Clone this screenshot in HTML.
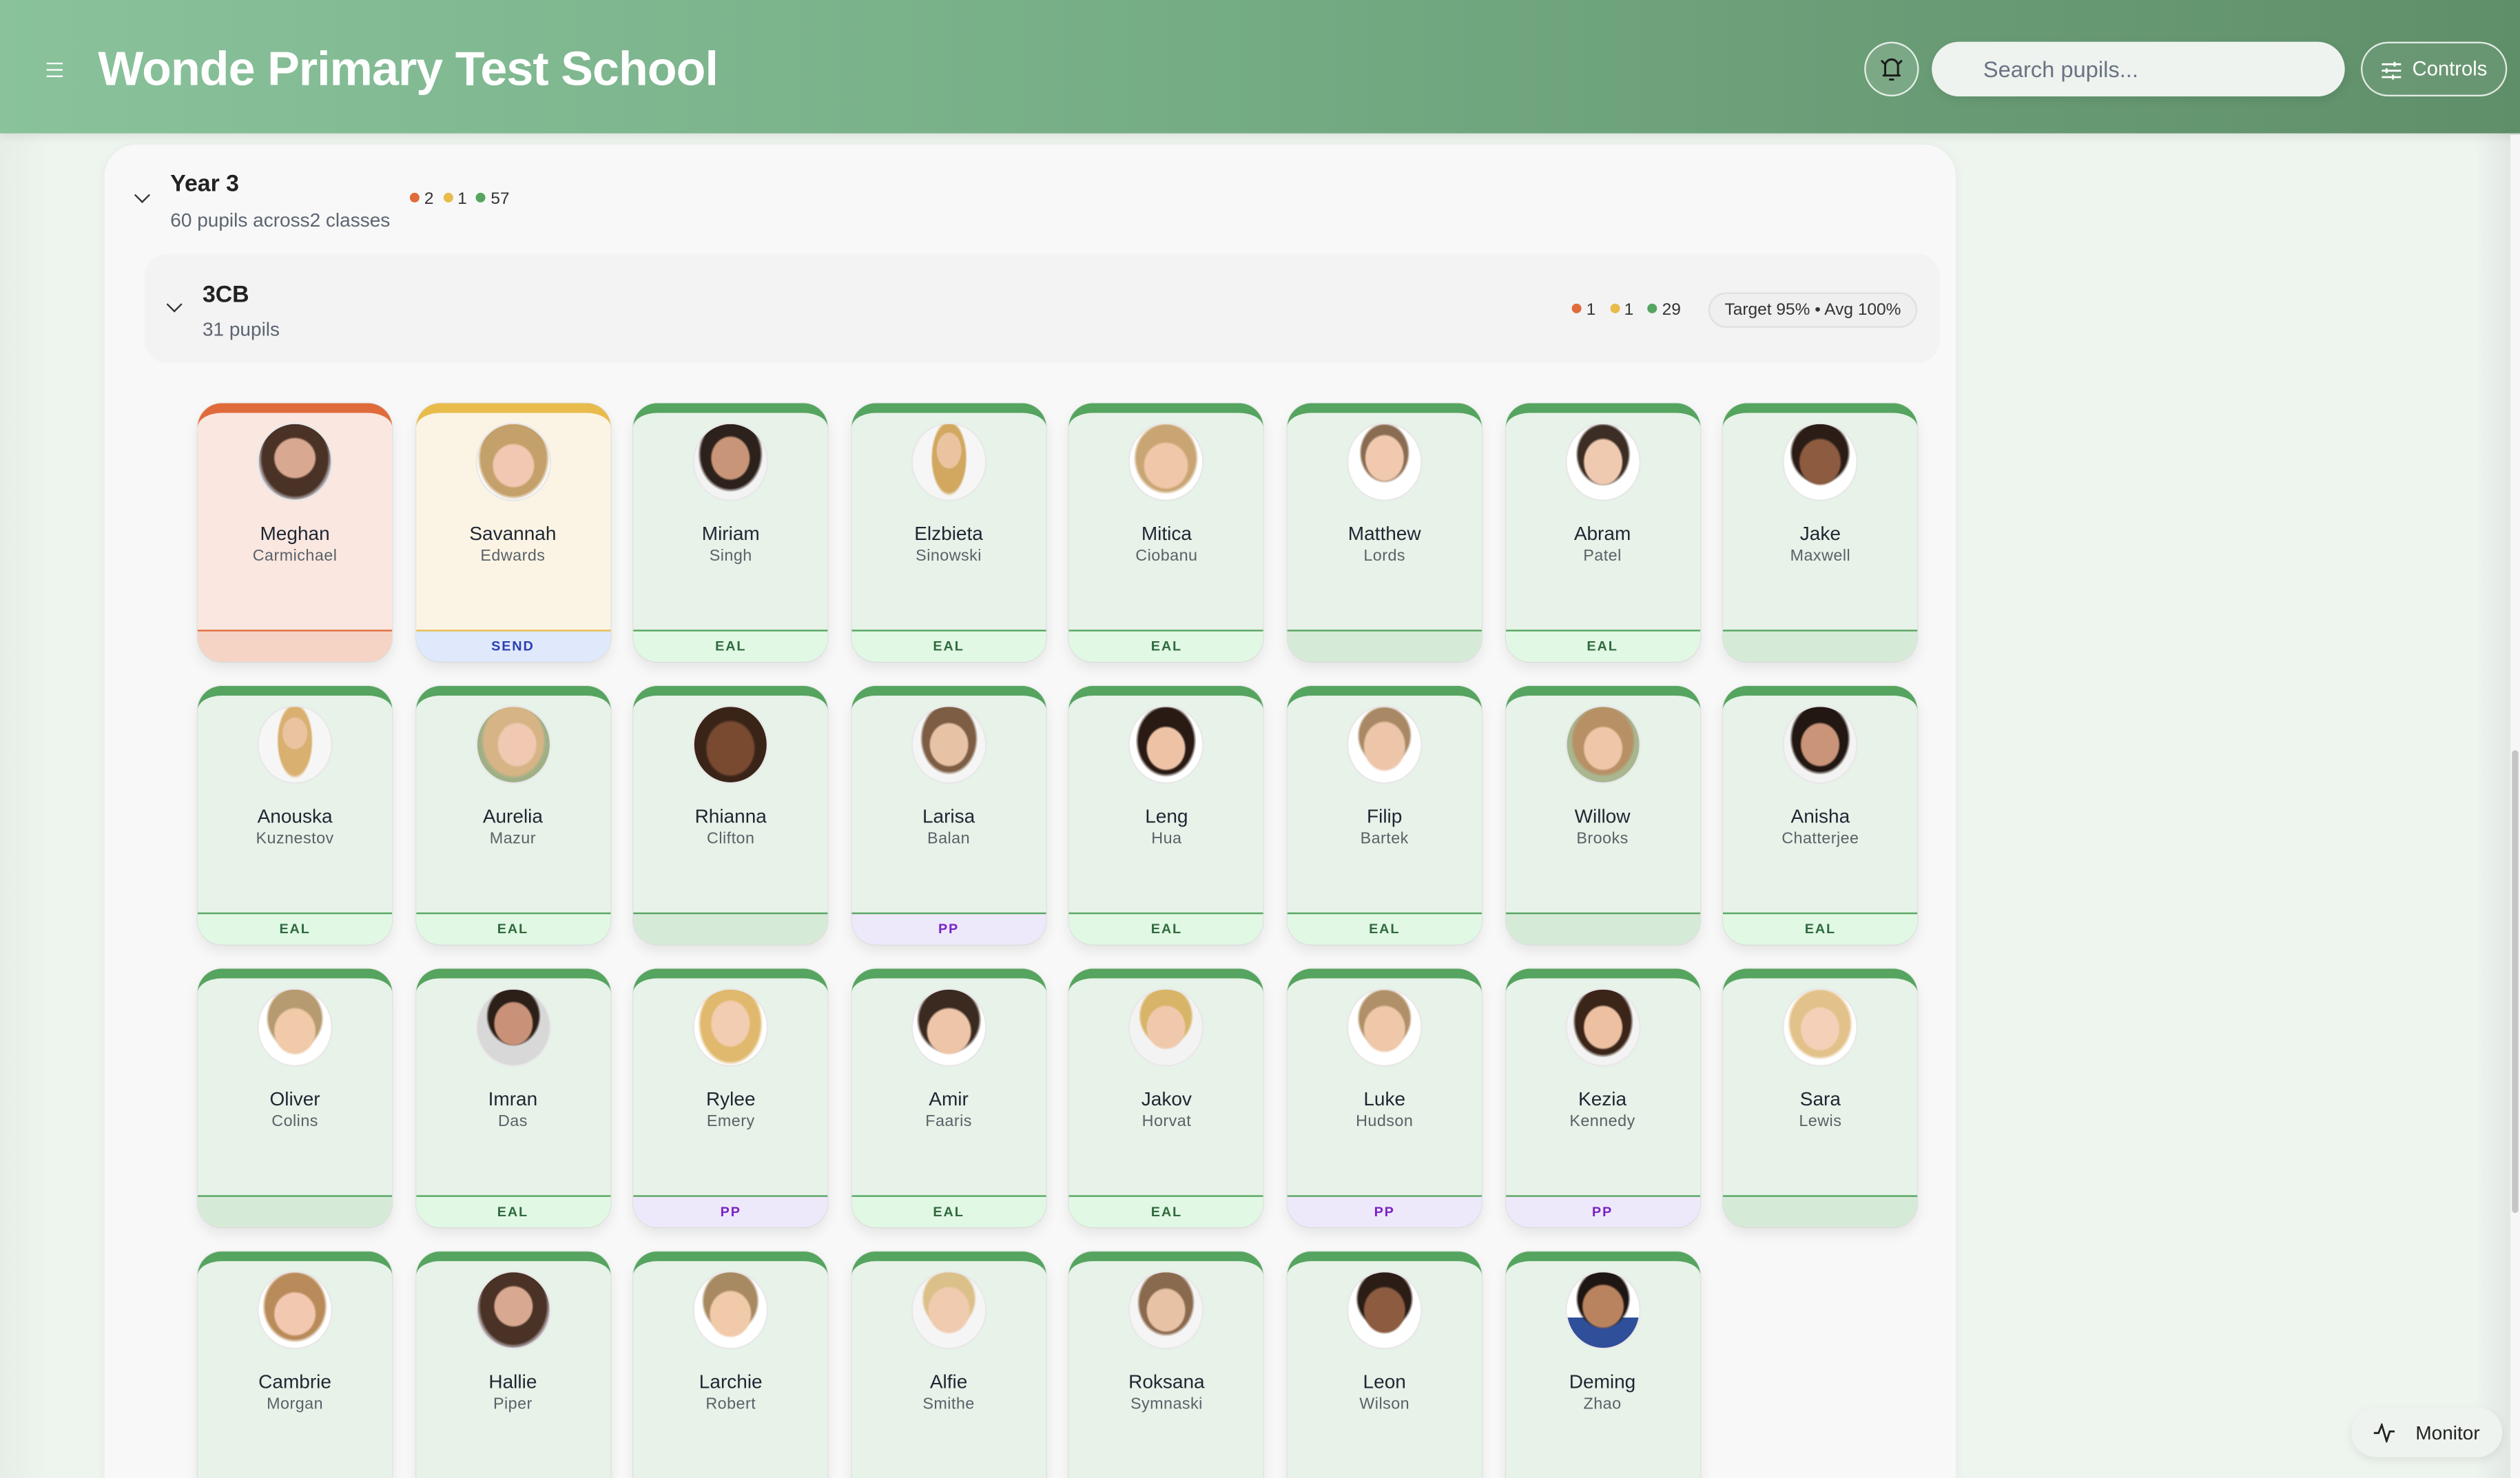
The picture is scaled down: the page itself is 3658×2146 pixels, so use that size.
<!DOCTYPE html>
<html><head><meta charset="utf-8"><style>
*{box-sizing:border-box;margin:0;padding:0}
html,body{width:3658px;height:2146px;overflow:hidden;background:#eaf1ea}
#s{position:absolute;left:0;top:0;width:1568px;height:920px;transform:scale(2.3329,2.3326);transform-origin:0 0;font-family:"Liberation Sans",sans-serif;background:linear-gradient(90deg,#e6eee7 0,#eef4ee 30px,#eef4ee 1540px,#e2e8e3 1560px);overflow:hidden}
.hdr{position:absolute;left:0;top:0;width:1568px;height:83px;background:linear-gradient(90deg,#89c29b,#74ab83 50%,#5f8f69);box-shadow:0 2px 6px rgba(0,0,0,.08)}
.ham{position:absolute;left:29px;top:39px;width:10px}
.ham i{display:block;height:1.4px;background:#fff;margin-bottom:2.6px}
.title{position:absolute;left:61px;top:27px;color:#fff;font-size:30px;font-weight:bold;letter-spacing:-0.4px}
.bell{position:absolute;left:1160px;top:26px;width:34px;height:34px;border-radius:50%;border:1px solid rgba(255,255,255,.8);background:rgba(255,255,255,.12)}
.search{position:absolute;left:1202px;top:26px;width:257px;height:34px;border-radius:17px;background:#eef3ef;color:#6a7383;font-size:14px;padding:9px 0 0 32px;box-shadow:0 2px 6px rgba(0,0,0,.08)}
.ctrl{position:absolute;left:1469px;top:26px;width:91px;height:34px;border-radius:17px;border:1px solid rgba(255,255,255,.8);color:#fff;font-size:12.5px;padding:9px 0 0 31px;background:rgba(255,255,255,.06)}
.panel{position:absolute;left:65px;top:90px;width:1152px;height:860px;border-radius:20px;background:#f7f8f7;box-shadow:0 1px 6px rgba(0,0,0,.05)}
.chev{position:absolute;width:7px;height:7px;border-right:1.3px solid #333;border-bottom:1.3px solid #333;transform:rotate(45deg)}
.t1{position:absolute;font-size:14.5px;color:#222;font-weight:bold}
.sub{position:absolute;font-size:12px;color:#5d6472}
.dot{display:inline-block;width:6px;height:6px;border-radius:50%;margin-right:3px;vertical-align:1px}
.cls{position:absolute;left:90px;top:158px;width:1117px;height:68px;border-radius:14px;background:#f2f3f2}
.pill{position:absolute;left:1063px;top:182px;width:130px;height:22px;border-radius:11px;border:1px solid #e0e0e0;background:#efefef;font-size:10.5px;color:#333;text-align:center;line-height:20px}
.grid{position:absolute;left:123px;top:251px;display:grid;grid-template-columns:repeat(8,121px);column-gap:14.6px;row-gap:15px}
.c{position:relative;width:121px;height:161px;border-radius:15px;overflow:hidden;background:#e7f2e8;border-top:6px solid #55a45f;box-shadow:0 4px 8px rgba(0,0,0,.08),0 0 0 .5px rgba(0,0,0,.06);text-align:center}
.c .av{position:absolute;left:37px;top:6px;width:47px;height:49px;border-radius:50%;border:1px solid #e8e8e8}
.c .n{position:absolute;left:0;right:0;top:68px;font-size:12px;color:#1f2633}
.c .s{position:absolute;left:0;right:0;top:84px;font-size:10px;color:#5a6168;letter-spacing:.2px}
.c .b{position:absolute;left:0;right:0;bottom:0;height:20px;border-top:1.5px solid #55a45f;background:#d6ead8;font-size:8.5px;font-weight:bold;letter-spacing:.8px;line-height:19px}
.b.e{background:#e1f8e4;color:#2f6a3e}.b.p{background:#eee8fb;color:#7a24c4}.b.d{background:#dfe9fb;color:#2b3fb2}
.c.r{background:#fae7e0;border-top-color:#e06b3a}.c.r .b{background:#f5d4c5;border-top-color:#e06b3a}
.c.y{background:#fbf4e4;border-top-color:#e8bb4a}.c.y .b{border-top-color:#e8bb4a}
.mon{position:absolute;left:1463px;top:876px;width:94px;height:31px;border-radius:16px;background:#eef3ef;box-shadow:0 2px 6px rgba(0,0,0,.08);font-size:12px;color:#222;padding:9px 0 0 40px}
</style></head><body><div id="s">
<div class="hdr">
<div class="ham"><i></i><i></i><i></i></div>
<div class="title">Wonde Primary Test School</div>
<div class="bell"><svg width="34" height="34" viewBox="0 0 34 34" style="position:absolute;left:-1px;top:-1px"><path d="M12 21h10M13 21v-6a4 4 0 0 1 8 0v6M16 23.5h2M11 12l1.5 1.5M23 12l-1.5 1.5" stroke="#1c1c1c" stroke-width="1.3" fill="none" stroke-linecap="round"/></svg></div>
<div class="search">Search pupils...</div>
<div class="ctrl"><svg width="14" height="14" viewBox="0 0 14 14" style="position:absolute;left:11px;top:10px"><path d="M1 3h12M1 7h12M1 11h12M9 1.5v3M4 5.5v3M8 9.5v3" stroke="#fff" stroke-width="1.2"/></svg>Controls</div>
</div>
<div class="panel"></div>
<div class="chev" style="left:85px;top:118px"></div>
<div class="t1" style="left:106px;top:107px">Year 3</div>
<div class="sub" style="left:106px;top:130px">60 pupils across2 classes</div>
<div class="sub" style="left:255px;top:118px;font-size:10.5px;color:#333"><span class="dot" style="background:#e06b3a"></span>2 &nbsp;<span class="dot" style="background:#e8bb4a"></span>1 &nbsp;<span class="dot" style="background:#55a45f"></span>57</div>
<div class="cls"></div>
<div class="chev" style="left:105px;top:186px"></div>
<div class="t1" style="left:126px;top:176px">3CB</div>
<div class="sub" style="left:126px;top:198px">31 pupils</div>
<div class="sub" style="left:978px;top:187px;font-size:10.5px;color:#333"><span class="dot" style="background:#e06b3a"></span>1 &nbsp;&nbsp;<span class="dot" style="background:#e8bb4a"></span>1 &nbsp;&nbsp;<span class="dot" style="background:#55a45f"></span>29</div>
<div class="pill">Target 95% • Avg 100%</div>
<div class="grid">
<div class="c r"><div class="av" style="background:radial-gradient(ellipse 30% 28% at 50% 45%,#d9a890 90%,transparent),radial-gradient(ellipse 50% 55% at 50% 45%,#4a3226 90%,transparent),#b9b3b8"></div><div class="n">Meghan</div><div class="s">Carmichael</div><div class="b"></div></div>
<div class="c y"><div class="av" style="background:radial-gradient(ellipse 30% 30% at 50% 55%,#f1c9b2 90%,transparent),radial-gradient(ellipse 50% 55% at 50% 45%,#c4a06a 90%,transparent),#fff"></div><div class="n">Savannah</div><div class="s">Edwards</div><div class="b d">SEND</div></div>
<div class="c"><div class="av" style="background:radial-gradient(ellipse 28% 30% at 50% 45%,#c99578 90%,transparent),radial-gradient(ellipse 45% 50% at 50% 40%,#2d211c 90%,transparent),#f3f3f3"></div><div class="n">Miriam</div><div class="s">Singh</div><div class="b e">EAL</div></div>
<div class="c"><div class="av" style="background:radial-gradient(ellipse 18% 25% at 50% 35%,#eac3a0 90%,transparent),radial-gradient(ellipse 25% 50% at 50% 45%,#d2a760 90%,transparent),#f6f6f6"></div><div class="n">Elzbieta</div><div class="s">Sinowski</div><div class="b e">EAL</div></div>
<div class="c"><div class="av" style="background:radial-gradient(ellipse 32% 32% at 50% 55%,#f0c7a8 90%,transparent),radial-gradient(ellipse 45% 48% at 50% 45%,#c9a574 90%,transparent),#fff"></div><div class="n">Mitica</div><div class="s">Ciobanu</div><div class="b e">EAL</div></div>
<div class="c"><div class="av" style="background:radial-gradient(ellipse 28% 32% at 50% 45%,#f0c9ae 90%,transparent),radial-gradient(ellipse 35% 40% at 50% 38%,#8a6c52 90%,transparent),#fff"></div><div class="n">Matthew</div><div class="s">Lords</div><div class="b"></div></div>
<div class="c"><div class="av" style="background:radial-gradient(ellipse 28% 32% at 50% 50%,#efc9b0 90%,transparent),radial-gradient(ellipse 38% 42% at 50% 40%,#3c2d25 90%,transparent),#fff"></div><div class="n">Abram</div><div class="s">Patel</div><div class="b e">EAL</div></div>
<div class="c"><div class="av" style="background:radial-gradient(ellipse 30% 32% at 50% 50%,#8c5b40 90%,transparent),radial-gradient(ellipse 42% 42% at 50% 38%,#2b1d16 90%,transparent),#fff"></div><div class="n">Jake</div><div class="s">Maxwell</div><div class="b"></div></div>
<div class="c"><div class="av" style="background:radial-gradient(ellipse 18% 22% at 50% 35%,#eac3a0 90%,transparent),radial-gradient(ellipse 25% 50% at 50% 45%,#d9b070 90%,transparent),#f6f6f6"></div><div class="n">Anouska</div><div class="s">Kuznestov</div><div class="b e">EAL</div></div>
<div class="c"><div class="av" style="background:radial-gradient(ellipse 28% 30% at 55% 50%,#f1c9b2 90%,transparent),radial-gradient(ellipse 45% 50% at 50% 45%,#d7b486 90%,transparent),#9fb087"></div><div class="n">Aurelia</div><div class="s">Mazur</div><div class="b e">EAL</div></div>
<div class="c"><div class="av" style="background:radial-gradient(ellipse 35% 38% at 50% 55%,#7a4a30 90%,transparent),#3a2418"></div><div class="n">Rhianna</div><div class="s">Clifton</div><div class="b"></div></div>
<div class="c"><div class="av" style="background:radial-gradient(ellipse 28% 30% at 50% 50%,#e8c2a5 90%,transparent),radial-gradient(ellipse 40% 48% at 50% 42%,#7d5d44 90%,transparent),#f5f5f5"></div><div class="n">Larisa</div><div class="s">Balan</div><div class="b p">PP</div></div>
<div class="c"><div class="av" style="background:radial-gradient(ellipse 28% 30% at 50% 55%,#eec3a5 90%,transparent),radial-gradient(ellipse 42% 48% at 50% 45%,#2a1a14 90%,transparent),#fff"></div><div class="n">Leng</div><div class="s">Hua</div><div class="b e">EAL</div></div>
<div class="c"><div class="av" style="background:radial-gradient(ellipse 30% 34% at 50% 52%,#edc6a9 90%,transparent),radial-gradient(ellipse 38% 40% at 50% 38%,#a88865 90%,transparent),#fff"></div><div class="n">Filip</div><div class="s">Bartek</div><div class="b e">EAL</div></div>
<div class="c"><div class="av" style="background:radial-gradient(ellipse 28% 30% at 50% 55%,#efc6a8 90%,transparent),radial-gradient(ellipse 45% 48% at 50% 45%,#b89066 90%,transparent),#a8b790"></div><div class="n">Willow</div><div class="s">Brooks</div><div class="b"></div></div>
<div class="c"><div class="av" style="background:radial-gradient(ellipse 28% 30% at 50% 50%,#c99478 90%,transparent),radial-gradient(ellipse 42% 48% at 50% 42%,#221712 90%,transparent),#f3f3f3"></div><div class="n">Anisha</div><div class="s">Chatterjee</div><div class="b e">EAL</div></div>
<div class="c"><div class="av" style="background:radial-gradient(ellipse 30% 32% at 50% 55%,#f0caa9 90%,transparent),radial-gradient(ellipse 40% 42% at 50% 38%,#b69a70 90%,transparent),#fff"></div><div class="n">Oliver</div><div class="s">Colins</div><div class="b"></div></div>
<div class="c"><div class="av" style="background:radial-gradient(ellipse 28% 30% at 50% 45%,#c99278 90%,transparent),radial-gradient(ellipse 38% 40% at 50% 35%,#2b1f18 90%,transparent),#d8d8d8"></div><div class="n">Imran</div><div class="s">Das</div><div class="b e">EAL</div></div>
<div class="c"><div class="av" style="background:radial-gradient(ellipse 28% 32% at 50% 45%,#f3cdb2 90%,transparent),radial-gradient(ellipse 45% 55% at 50% 45%,#e0b96e 90%,transparent),#fff"></div><div class="n">Rylee</div><div class="s">Emery</div><div class="b p">PP</div></div>
<div class="c"><div class="av" style="background:radial-gradient(ellipse 32% 32% at 50% 55%,#eec5a8 90%,transparent),radial-gradient(ellipse 45% 45% at 50% 40%,#3a2a20 90%,transparent),#fff"></div><div class="n">Amir</div><div class="s">Faaris</div><div class="b e">EAL</div></div>
<div class="c"><div class="av" style="background:radial-gradient(ellipse 28% 30% at 50% 50%,#f0c9ad 90%,transparent),radial-gradient(ellipse 38% 40% at 50% 35%,#d8b468 90%,transparent),#f3f3f3"></div><div class="n">Jakov</div><div class="s">Horvat</div><div class="b e">EAL</div></div>
<div class="c"><div class="av" style="background:radial-gradient(ellipse 30% 32% at 50% 52%,#efc8aa 90%,transparent),radial-gradient(ellipse 38% 40% at 50% 38%,#b09068 90%,transparent),#fff"></div><div class="n">Luke</div><div class="s">Hudson</div><div class="b p">PP</div></div>
<div class="c"><div class="av" style="background:radial-gradient(ellipse 28% 30% at 50% 50%,#ecc0a0 90%,transparent),radial-gradient(ellipse 42% 48% at 50% 42%,#3b2519 90%,transparent),#f3f3f3"></div><div class="n">Kezia</div><div class="s">Kennedy</div><div class="b p">PP</div></div>
<div class="c"><div class="av" style="background:radial-gradient(ellipse 28% 30% at 50% 52%,#f4d0b8 90%,transparent),radial-gradient(ellipse 45% 48% at 50% 45%,#e3c18a 90%,transparent),#fff"></div><div class="n">Sara</div><div class="s">Lewis</div><div class="b"></div></div>
<div class="c"><div class="av" style="background:radial-gradient(ellipse 30% 30% at 50% 55%,#f2c8b0 90%,transparent),radial-gradient(ellipse 45% 48% at 50% 45%,#b98b5a 90%,transparent),#fff"></div><div class="n">Cambrie</div><div class="s">Morgan</div></div>
<div class="c"><div class="av" style="background:radial-gradient(ellipse 28% 28% at 50% 45%,#d9a890 90%,transparent),radial-gradient(ellipse 50% 55% at 50% 45%,#4a3226 90%,transparent),#b9b3b8"></div><div class="n">Hallie</div><div class="s">Piper</div></div>
<div class="c"><div class="av" style="background:radial-gradient(ellipse 30% 32% at 50% 55%,#f0caa9 90%,transparent),radial-gradient(ellipse 40% 42% at 50% 38%,#a88a62 90%,transparent),#fff"></div><div class="n">Larchie</div><div class="s">Robert</div></div>
<div class="c"><div class="av" style="background:radial-gradient(ellipse 30% 32% at 50% 50%,#f1cbb0 90%,transparent),radial-gradient(ellipse 38% 40% at 50% 35%,#dcc08a 90%,transparent),#f5f5f5"></div><div class="n">Alfie</div><div class="s">Smithe</div></div>
<div class="c"><div class="av" style="background:radial-gradient(ellipse 28% 30% at 50% 50%,#e8c2a5 90%,transparent),radial-gradient(ellipse 40% 45% at 50% 40%,#8a6a4e 90%,transparent),#f5f5f5"></div><div class="n">Roksana</div><div class="s">Symnaski</div></div>
<div class="c"><div class="av" style="background:radial-gradient(ellipse 30% 32% at 50% 50%,#8c5b40 90%,transparent),radial-gradient(ellipse 40% 40% at 50% 35%,#2b1d16 90%,transparent),#fff"></div><div class="n">Leon</div><div class="s">Wilson</div></div>
<div class="c"><div class="av" style="background:radial-gradient(ellipse 30% 30% at 50% 45%,#b98360 90%,transparent),radial-gradient(ellipse 38% 40% at 50% 35%,#1e1612 90%,transparent),linear-gradient(#fff 60%,#2f4f9a 60%)"></div><div class="n">Deming</div><div class="s">Zhao</div></div>
</div>
<div style="position:absolute;left:1562px;top:84px;width:6px;height:836px;background:#f6f6f6"></div>
<div style="position:absolute;left:1563px;top:467px;width:4px;height:288px;border-radius:2px;background:#c5c5c5"></div>
<div class="mon"><svg width="14" height="12" viewBox="0 0 14 12" style="position:absolute;left:14px;top:10px"><path d="M0 6h3l2-5 3 10 2-6h3" stroke="#222" stroke-width="1.2" fill="none"/></svg>Monitor</div>
</div></body></html>
